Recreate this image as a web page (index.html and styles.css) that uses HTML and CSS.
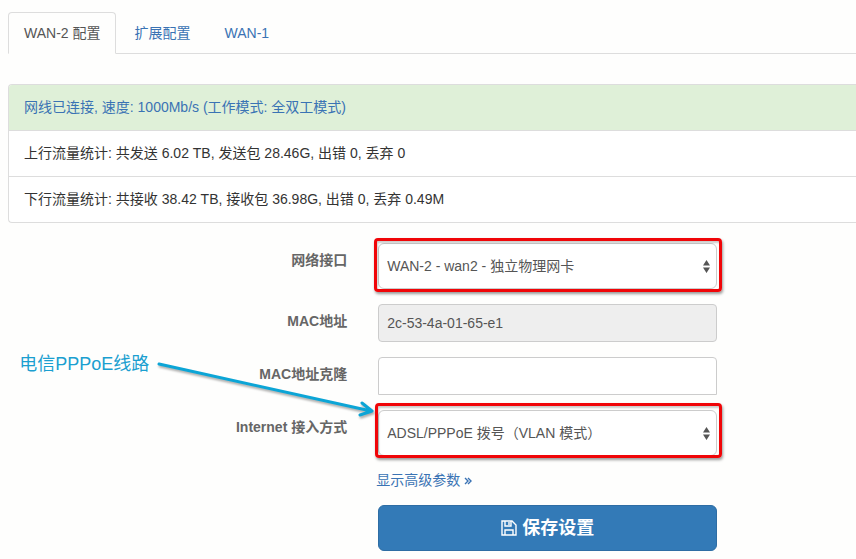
FILE: index.html
```html
<!DOCTYPE html>
<html lang="zh-CN">
<head>
<meta charset="utf-8">
<title>WAN-2 配置</title>
<link rel="stylesheet" href="styles.css">
</head>
<body>
<nav class="tabs">
  <a class="tab tab-active" href="#wan2">WAN-2 配置</a>
  <a class="tab" href="#ext">扩展配置</a>
  <a class="tab" href="#wan1">WAN-1</a>
</nav>
<main>
  <ul class="stats">
    <li class="stat stat-ok">网线已连接, 速度: 1000Mb/s (工作模式: 全双工模式)</li>
    <li class="stat">上行流量统计: 共发送 6.02 TB, 发送包 28.46G, 出错 0, 丢弃 0</li>
    <li class="stat">下行流量统计: 共接收 38.42 TB, 接收包 36.98G, 出错 0, 丢弃 0.49M</li>
  </ul>
  <form class="form">
    <label class="label" for="iface">网络接口</label>
    <div class="control marked">
      <select class="field select" id="iface"><option>WAN-2 - wan2 - 独立物理网卡</option></select>
      <svg class="caret" viewBox="0 0 7 13" aria-hidden="true"><path d="M3.5 0L7 5.5H0zM0 7.5H7L3.5 13z"/></svg>
    </div>

    <label class="label" for="mac">MAC地址</label>
    <div class="control"><input class="field" id="mac" type="text" value="2c-53-4a-01-65-e1" readonly></div>

    <label class="label" for="clone">MAC地址克隆</label>
    <div class="control"><input class="field field-open" id="clone" type="text"></div>

    <label class="label" for="mode">Internet 接入方式</label>
    <div class="control marked marked-mode">
      <select class="field select" id="mode"><option>ADSL/PPPoE 拨号（VLAN 模式）</option></select>
      <svg class="caret" viewBox="0 0 7 13" aria-hidden="true"><path d="M3.5 0L7 5.5H0zM0 7.5H7L3.5 13z"/></svg>
      <div class="note">
        <span>电信PPPoE线路</span>
        <svg class="arrow" viewBox="0 0 222 62" aria-hidden="true"><path d="M4 6L216 53M207 45L217 53L205 57"/></svg>
      </div>
    </div>

    <div class="actions">
      <a class="more" href="#advanced">显示高级参数 <svg class="chevrons" viewBox="0 0 8 8" aria-hidden="true"><path d="M1 1L4 4L1 7M4 1L7 4L4 7"/></svg></a>
      <button class="save" type="submit">
        <svg class="disk" viewBox="0 0 16 16" aria-hidden="true"><path d="M1 1H11L15 5V15H1zM4 1V6H10V1M8 2V5M4 15V10H12V15"/></svg>
        保存设置
      </button>
    </div>
  </form>
</main>
</body>
</html>
```
FILE: styles.css
```css
* { box-sizing: border-box; }

body {
  margin: 12px 0 8px 8px;
  overflow-x: hidden;
  background: #fefefd;
  color: #333;
  font: 14px/20px "Liberation Sans", "Noto Sans CJK SC", sans-serif;
}

a { color: #3a73b4; text-decoration: none; }

.tabs {
  display: flex;
  gap: 2px;
  border-bottom: 1px solid #ddd;
}

.tab {
  margin-bottom: -1px;
  padding: 10px 15px;
  border: 1px solid transparent;
  border-radius: 4px 4px 0 0;
}

.tab-active {
  border-color: #ddd;
  border-bottom-color: #fefefd;
  background: #fefefd;
  color: #555;
}

.stats {
  margin: 30px 0 20px;
  padding: 0;
  list-style: none;
  border: 1px solid #ddd;
  border-right: 0;
  border-radius: 4px 0 0 4px;
  background: #fff;
  overflow: hidden;
}

.stat { padding: 12px 15px 13px; }
.stat + .stat { border-top: 1px solid #ddd; }
.stat-ok { background: #dff0d8; color: #3a73b4; }

.form {
  display: grid;
  grid-template-columns: 40% 40%;
  column-gap: 31px;
  row-gap: 15px;
}

.label {
  padding-top: 7px;
  text-align: right;
  font-weight: bold;
  color: #666;
}

.control { position: relative; }

.field {
  display: block;
  width: 100%;
  height: 38px;
  padding: 0 8px;
  border: 1px solid #ccc;
  border-radius: 4px;
  background: #fff;
  color: #555;
  font: inherit;
}

.field:read-only:not(select) { background: #eee; }
.field-open { border-radius: 4px 4px 0 0; }

.select {
  height: 46px;
  padding-right: 24px;
  border-radius: 6px;
  appearance: none;
}

.caret {
  position: absolute;
  top: 17px;
  right: 7px;
  width: 7px;
  height: 13px;
  fill: #555;
  pointer-events: none;
}

/* red highlight around a field */
.marked::after {
  content: "";
  position: absolute;
  inset: -5px -5px -3px -4px;
  border: 3px solid #f00508;
  border-radius: 4px;
  box-shadow: 1px 2px 3px #0006, inset 1px 2px 2px #0003;
  pointer-events: none;
}

.marked-mode::after { inset: -7px -5px -2px -3px; }

/* callout that points at the field's top left corner */
.note {
  position: absolute;
  right: 100%;
  top: -58px;
  display: flex;
  gap: 6px;
  margin-right: 1px;
  color: #1b9fd0;
  font-size: 18px;
  line-height: 24px;
  white-space: nowrap;
  pointer-events: none;
}

.arrow {
  width: 222px;
  height: 62px;
  margin-top: 6px;
  fill: none;
  stroke: #0ca5d6;
  stroke-width: 3;
  stroke-linecap: round;
  stroke-linejoin: round;
  filter: drop-shadow(1px 2px 1px #0005);
}

.actions {
  grid-column: 2;
  display: flex;
  flex-direction: column;
  gap: 15px;
  margin-top: -1px;
}

.more { align-self: flex-start; margin-left: -2px; }

.chevrons {
  width: 8px;
  height: 8px;
  fill: none;
  stroke: #3a73b4;
  stroke-width: 1.4;
}

.save {
  display: flex;
  align-items: center;
  justify-content: center;
  gap: 5px;
  width: 100%;
  height: 46px;
  padding: 0;
  border: 1px solid #2e6da4;
  border-radius: 6px;
  background: #337ab7;
  color: #fff;
  font: bold 18px/24px "Liberation Sans", "Noto Sans CJK SC", sans-serif;
}

.disk {
  width: 16px;
  height: 16px;
  fill: none;
  stroke: #fff;
  stroke-width: 1.4;
}
```
